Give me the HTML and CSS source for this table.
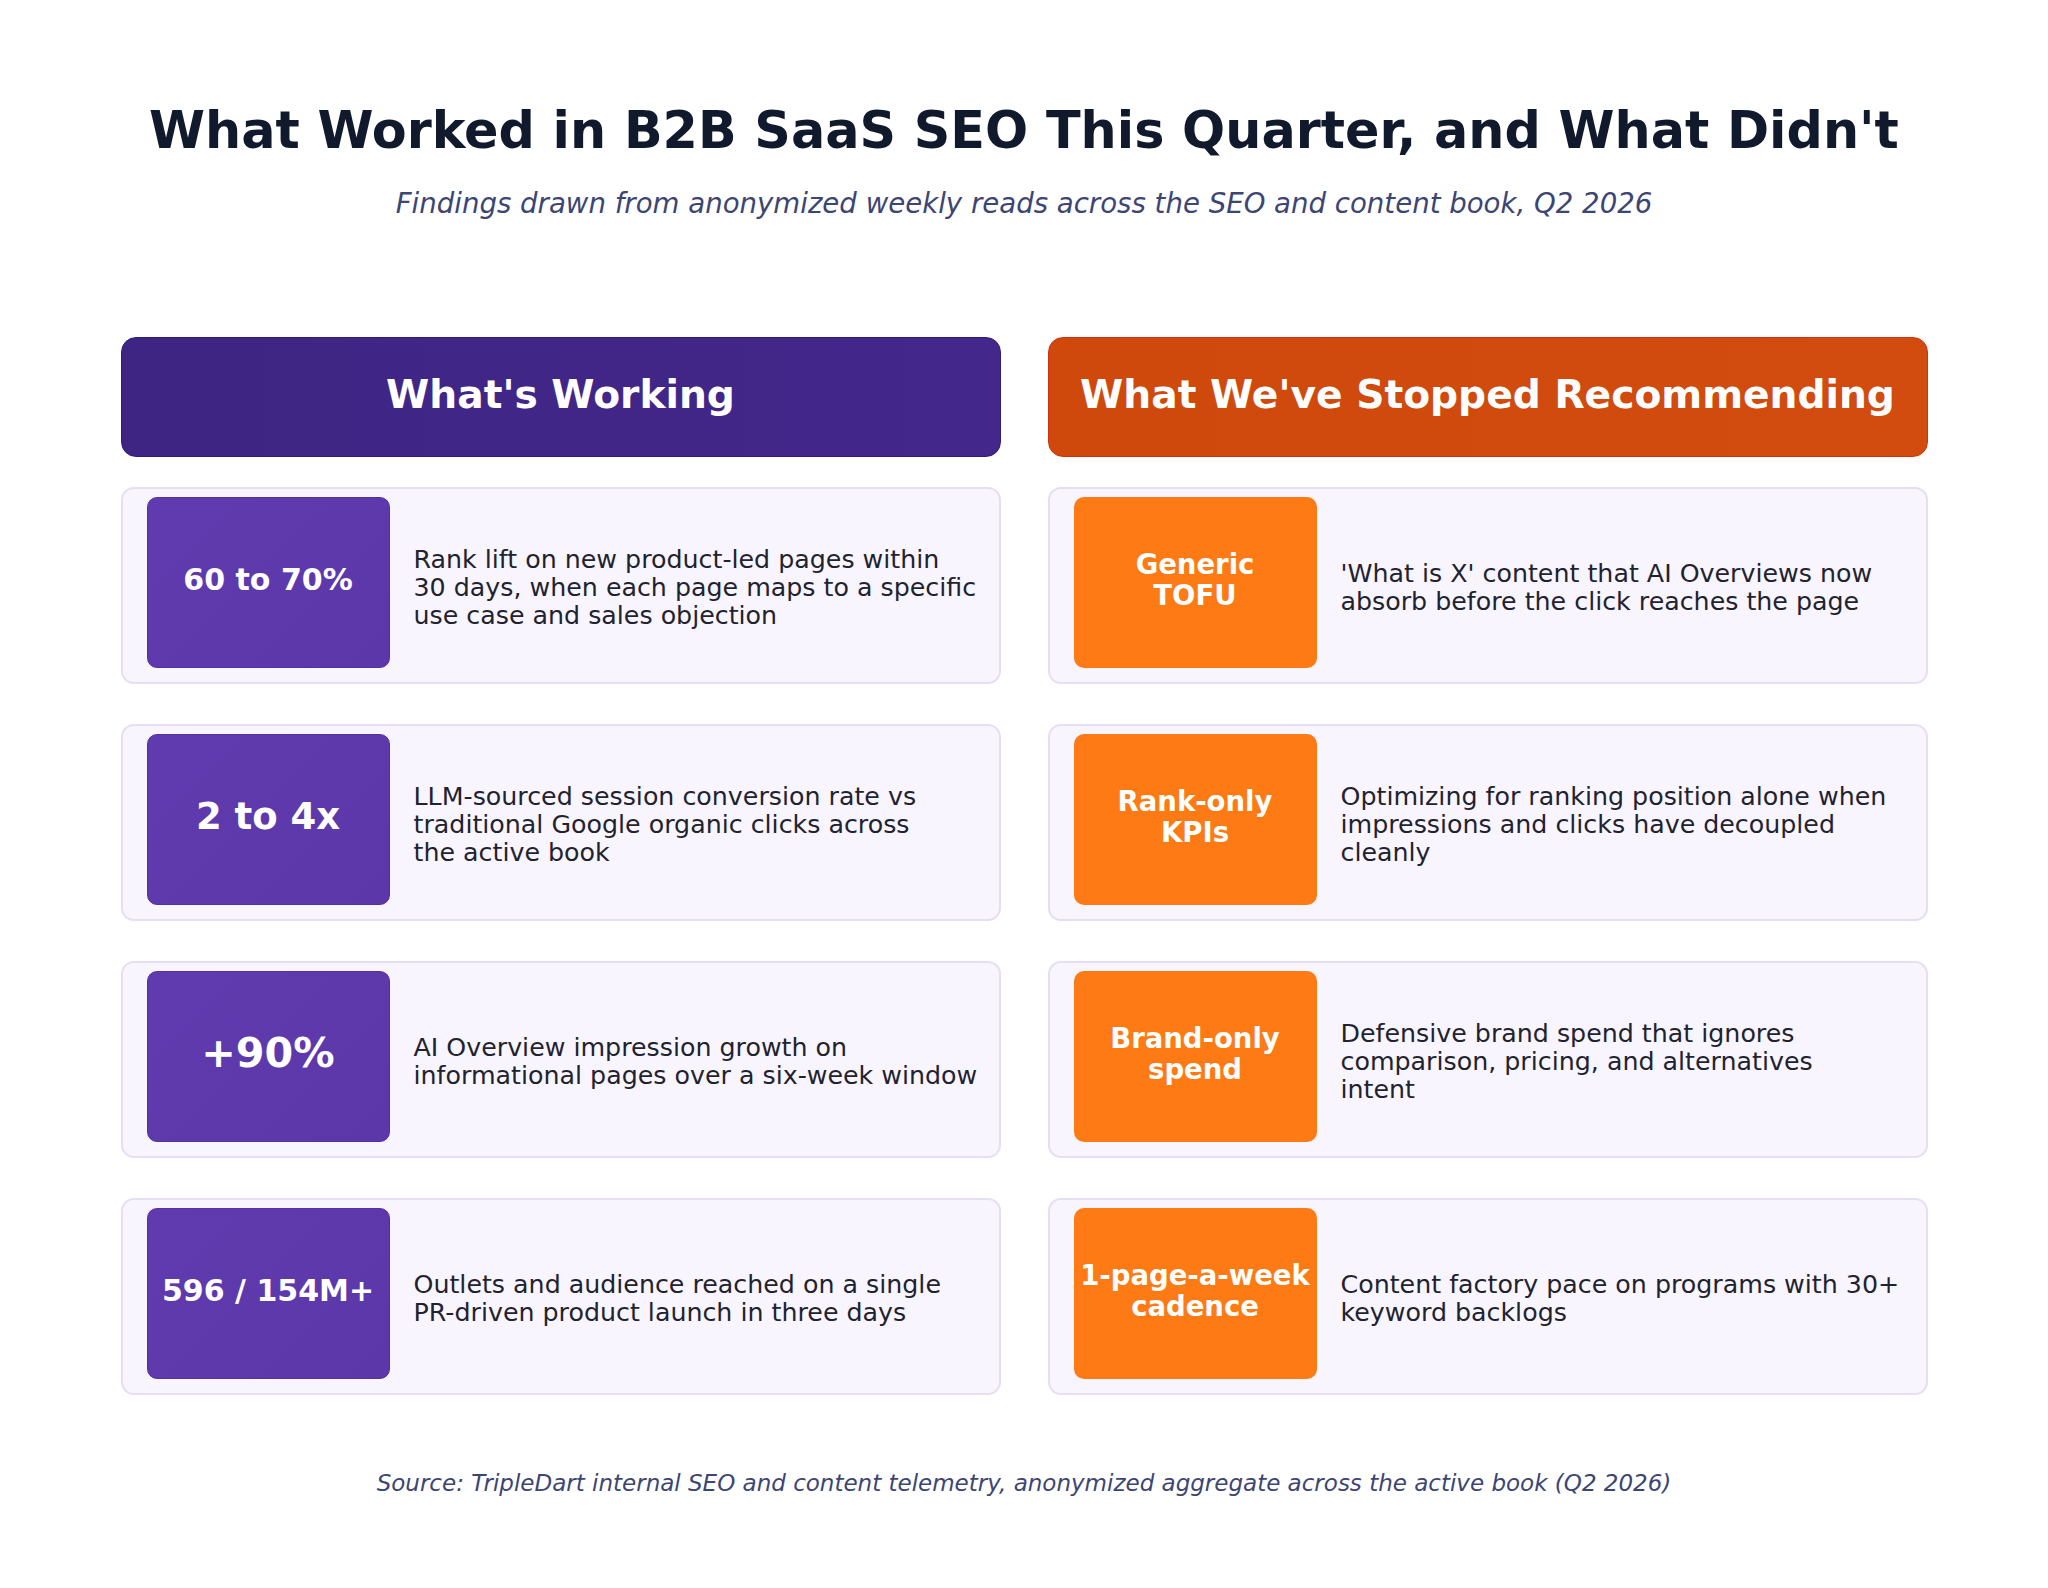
FILE: index.html
```html
<!DOCTYPE html>
<html lang="en">
<head>
<meta charset="utf-8">
<title>What Worked in B2B SaaS SEO This Quarter</title>
<link rel="stylesheet" href="styles.css">
</head>
<body>
<main class="page">
  <h1 class="title">What Worked in B2B SaaS SEO This Quarter, and What Didn't</h1>
  <p class="subtitle">Findings drawn from anonymized weekly reads across the SEO and content book, Q2 2026</p>

  <section class="columns">
    <div class="column">
      <div class="col-header working">What's Working</div>
      <div class="card">
        <div class="badge purple fs-30">60 to 70%</div>
        <div class="desc">Rank lift on new product-led pages within<br>30 days, when each page maps to a specific<br>use case and sales objection</div>
      </div>
      <div class="card">
        <div class="badge purple fs-37">2 to 4x</div>
        <div class="desc">LLM-sourced session conversion rate vs<br>traditional Google organic clicks across<br>the active book</div>
      </div>
      <div class="card">
        <div class="badge purple fs-41">+90%</div>
        <div class="desc">AI Overview impression growth on<br>informational pages over a six-week window</div>
      </div>
      <div class="card">
        <div class="badge purple fs-29">596 / 154M+</div>
        <div class="desc">Outlets and audience reached on a single<br>PR-driven product launch in three days</div>
      </div>
    </div>

    <div class="column">
      <div class="col-header stopped">What We've Stopped Recommending</div>
      <div class="card">
        <div class="badge orange fs-27">Generic<br>TOFU</div>
        <div class="desc">'What is X' content that AI Overviews now<br>absorb before the click reaches the page</div>
      </div>
      <div class="card">
        <div class="badge orange fs-27">Rank-only<br>KPIs</div>
        <div class="desc">Optimizing for ranking position alone when<br>impressions and clicks have decoupled<br>cleanly</div>
      </div>
      <div class="card">
        <div class="badge orange fs-27">Brand-only<br>spend</div>
        <div class="desc">Defensive brand spend that ignores<br>comparison, pricing, and alternatives<br>intent</div>
      </div>
      <div class="card">
        <div class="badge orange fs-27">1-page-a-week<br>cadence</div>
        <div class="desc">Content factory pace on programs with 30+<br>keyword backlogs</div>
      </div>
    </div>
  </section>

  <p class="source">Source: TripleDart internal SEO and content telemetry, anonymized aggregate across the active book (Q2 2026)</p>
</main>
</body>
</html>
```

FILE: styles.css
```css
html, body {
  margin: 0;
  padding: 0;
  background: #ffffff;
}

body {
  font-family: "DejaVu Sans", "Liberation Sans", sans-serif;
  color: #1f2330;
}

.page {
  width: 2048px;
  height: 1588px;
  box-sizing: border-box;
  padding-top: 106px;
  display: flex;
  flex-direction: column;
  align-items: center;
}

.title {
  margin: 0;
  font-size: 50.8px;
  line-height: 50px;
  font-weight: 700;
  color: #111a2d;
  text-align: center;
  white-space: nowrap;
}

.subtitle {
  margin: 34px 0 0;
  font-size: 27.6px;
  line-height: 27px;
  font-style: italic;
  color: #3c4573;
  text-align: center;
  white-space: nowrap;
}

.columns {
  margin-top: 120px;
  display: grid;
  grid-template-columns: 880px 880px;
  column-gap: 47px;
}

.column {
  display: flex;
  flex-direction: column;
  gap: 40px;
}

.col-header {
  height: 120px;
  box-sizing: border-box;
  border-radius: 15px;
  padding-bottom: 5px;
  display: flex;
  align-items: center;
  justify-content: center;
  font-size: 39.2px;
  line-height: 39px;
  font-weight: 700;
  color: #ffffff;
  margin-bottom: -10px;
  white-space: nowrap;
}

.col-header.working {
  background: linear-gradient(90deg, #3e2583 0%, #43278b 100%);
  border: 1px solid #2c1c80;
}

.col-header.stopped {
  background: linear-gradient(90deg, #cf490d 0%, #d24c0f 100%);
  border: 1px solid #d2300e;
}

.card {
  height: 197px;
  box-sizing: border-box;
  border: 2px solid #e5def5;
  border-radius: 13px;
  background: #f9f5fe;
  padding: 8px 0 14px 24px;
  display: flex;
  align-items: center;
  gap: 24px;
}

.badge {
  width: 243px;
  height: 171px;
  flex: none;
  align-self: flex-start;
  box-sizing: border-box;
  padding-bottom: 6px;
  border-radius: 10px;
  display: flex;
  align-items: center;
  justify-content: center;
  text-align: center;
  font-weight: 700;
  color: #ffffff;
  white-space: nowrap;
}

.badge.purple {
  background: linear-gradient(135deg, #5f3baf 0%, #5b37a9 100%);
  border: 1px solid #5330a3;
}

.badge.orange {
  background: #fd7a14;
}

.fs-30 { font-size: 30px; line-height: 30px; }
.fs-37 { font-size: 37px; line-height: 37px; }
.fs-41 { font-size: 41.3px; line-height: 41px; }
.fs-29 { font-size: 30px; line-height: 30px; }
.fs-27 { font-size: 27.5px; line-height: 31px; }

.desc {
  margin-top: 10px;
  font-size: 25.3px;
  line-height: 28px;
  color: #1f2330;
  white-space: nowrap;
}

.source {
  margin: 77px 0 0;
  font-size: 23px;
  line-height: 22px;
  font-style: italic;
  color: #3c4573;
  text-align: center;
  white-space: nowrap;
}
```
